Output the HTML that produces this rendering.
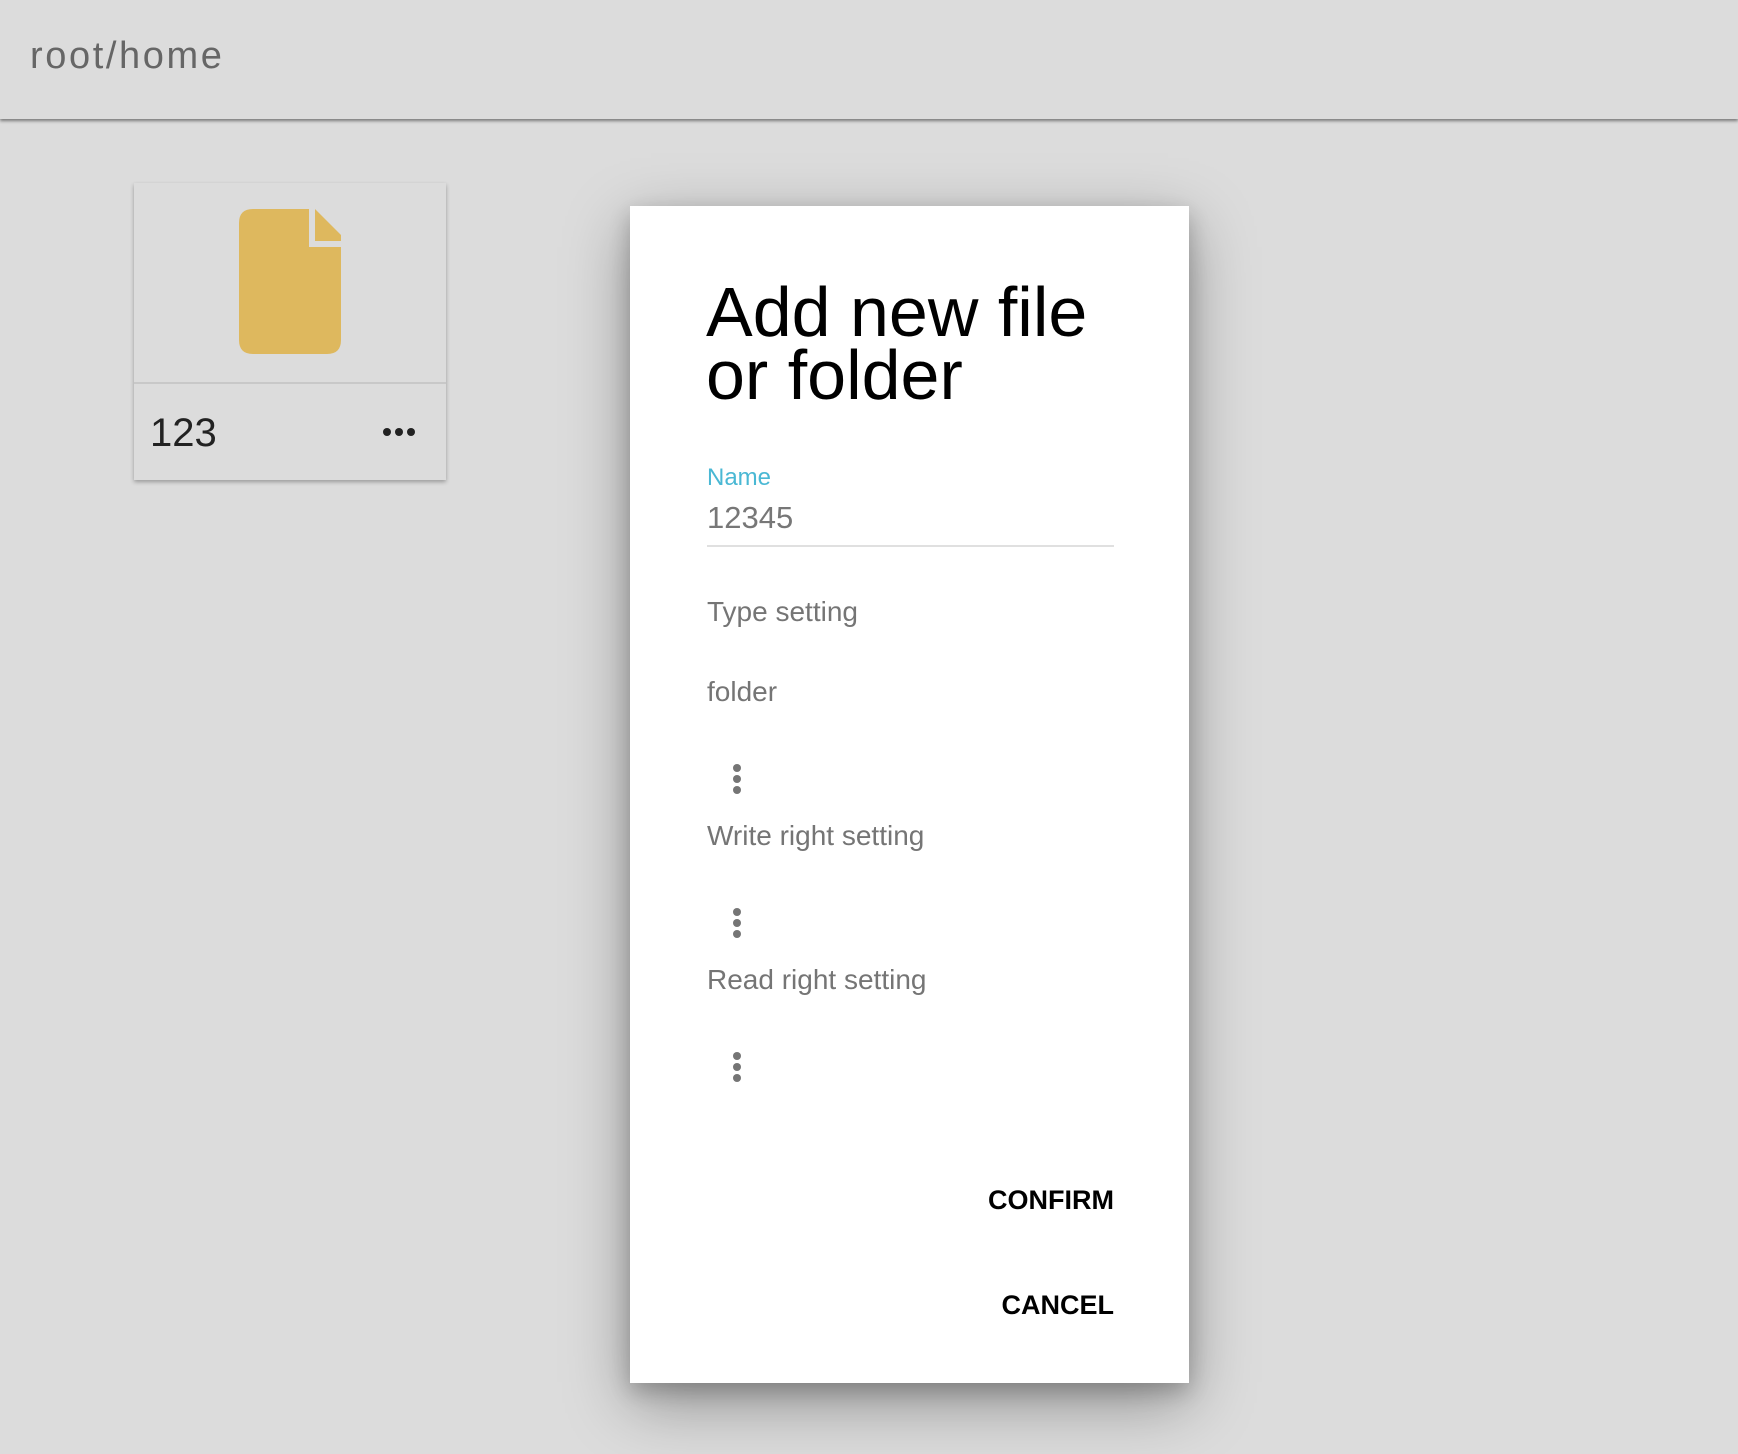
<!DOCTYPE html>
<html><head><meta charset="utf-8"><style>
*{margin:0;padding:0;box-sizing:border-box}
body{width:1738px;height:1454px;background:#dcdcdc;position:relative;overflow:hidden;font-family:"Liberation Sans",sans-serif}
.a{position:absolute;line-height:1;white-space:nowrap}
.hdr{position:absolute;left:0;top:0;width:1738px;height:119px;background:#dcdcdc;box-shadow:0 2px 3px rgba(0,0,0,.45)}
.card{position:absolute;left:134px;top:183px;width:312px;height:297px;background:#dcdcdc;box-shadow:0 2px 4px rgba(0,0,0,.3)}
.dlg{position:absolute;left:630px;top:206px;width:559px;height:1177px;background:#fff;box-shadow:0 20px 60px rgba(0,0,0,.35),0 8px 20px rgba(0,0,0,.2)}
.g{color:#757575}
.dots{position:absolute;width:8px}
.dots i{display:block;width:8px;height:8px;border-radius:50%;background:#757575;margin-bottom:3px}
</style></head><body>
<div class="hdr"></div>
<div class="a" style="left:30px;top:37px;font-size:38px;color:#666;letter-spacing:2.6px">root/home</div>
<div class="card">
 <svg style="position:absolute;left:105px;top:26px" width="102" height="145" viewBox="0 0 102 145">
  <path d="M14 0H70V38H102V131Q102 145 88 145H14Q0 145 0 131V14Q0 0 14 0Z" fill="#deb85e"/>
  <path d="M76 0L102 26V32H76Z" fill="#deb85e"/>
 </svg>
 <div style="position:absolute;left:0;top:199px;width:312px;height:2px;background:#c8c8c8"></div>
 <div class="a" style="left:16px;top:230px;font-size:40px;color:#222">123</div>
 <div style="position:absolute;left:249px;top:245px">
  <span style="position:absolute;left:0;width:8px;height:8px;border-radius:50%;background:#222"></span>
  <span style="position:absolute;left:12px;width:8px;height:8px;border-radius:50%;background:#222"></span>
  <span style="position:absolute;left:24px;width:8px;height:8px;border-radius:50%;background:#222"></span>
 </div>
</div>
<div class="dlg"></div>
<div class="a" style="left:706px;top:281px;font-size:70px;color:#000;line-height:63px">Add new file<br>or folder</div>
<div class="a" style="left:707px;top:466px;font-size:24px;color:#4ab8d4">Name</div>
<div class="a" style="left:707px;top:502px;font-size:31px;color:#777">12345</div>
<div style="position:absolute;left:707px;top:545px;width:407px;height:2px;background:#e0e0e0"></div>
<div class="a g" style="left:707px;top:598px;font-size:28px">Type setting</div>
<div class="a g" style="left:707px;top:678px;font-size:28px">folder</div>
<div class="dots" style="left:733px;top:764px"><i></i><i></i><i></i></div>
<div class="a g" style="left:707px;top:822px;font-size:28px">Write right setting</div>
<div class="dots" style="left:733px;top:908px"><i></i><i></i><i></i></div>
<div class="a g" style="left:707px;top:966px;font-size:28px">Read right setting</div>
<div class="dots" style="left:733px;top:1052px"><i></i><i></i><i></i></div>
<div class="a" style="right:624px;top:1187px;font-size:27px;font-weight:bold;color:#000">CONFIRM</div>
<div class="a" style="right:624px;top:1292px;font-size:27px;font-weight:bold;color:#000">CANCEL</div>
</body></html>
